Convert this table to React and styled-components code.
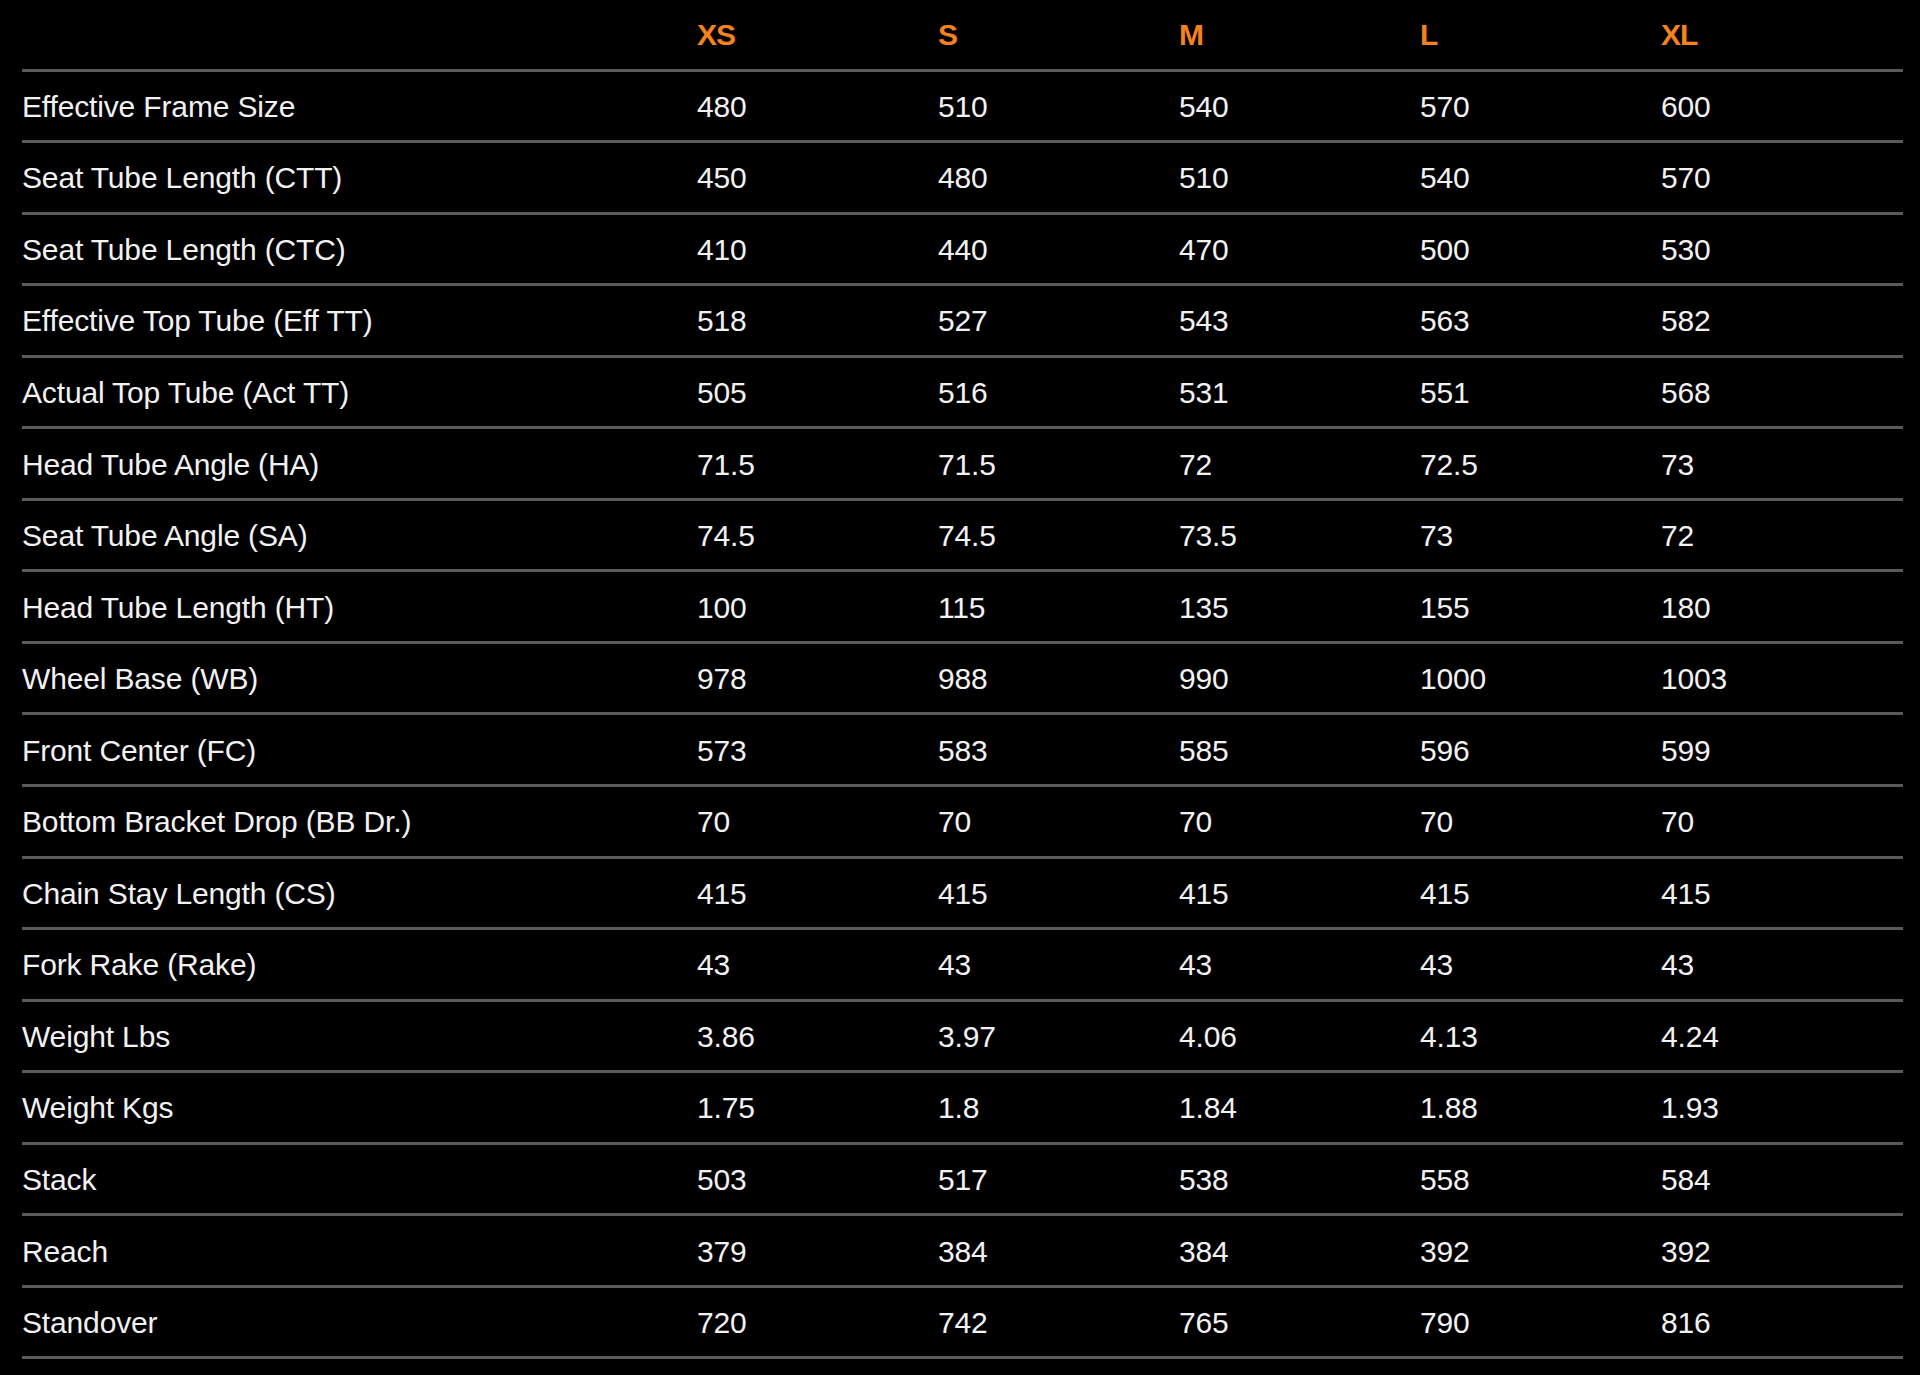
import React from "react";
import styled, { createGlobalStyle } from "styled-components";

const Global = createGlobalStyle`
  html, body {
    margin: 0;
    padding: 0;
    background: #000;
  }
  body {
    min-height: 1375px;
    font-family: "Liberation Sans", Arial, sans-serif;
  }
`;

const Page = styled.div`
  background: #000;
  min-height: 1375px;
  padding: 0 17px 0 22px;
  box-sizing: border-box;
`;

const Table = styled.div`
  display: flex;
  flex-direction: column;
`;

const Row = styled.div`
  display: grid;
  grid-template-columns: 675px repeat(5, 241px);
  align-items: center;
  height: ${(p) => (p.$header ? "71.5px" : "71.56px")};
  box-sizing: border-box;
  border-bottom: 3px solid #5a5a5a;
  padding-top: ${(p) => (p.$header ? "0" : "2px")};
`;

const Label = styled.div`
  color: #f2f2f2;
  font-size: 30px;
  letter-spacing: -0.15px;
  white-space: nowrap;
`;

const Cell = styled.div`
  color: #f2f2f2;
  font-size: 30px;
  letter-spacing: -0.15px;
`;

const Size = styled.div`
  color: #f5821f;
  font-size: 30px;
  font-weight: 700;
  letter-spacing: -1px;
  margin-top: 1px;
`;

const sizes = ["XS", "S", "M", "L", "XL"];

const rows = [
  ["Effective Frame Size", "480", "510", "540", "570", "600"],
  ["Seat Tube Length (CTT)", "450", "480", "510", "540", "570"],
  ["Seat Tube Length (CTC)", "410", "440", "470", "500", "530"],
  ["Effective Top Tube (Eff TT)", "518", "527", "543", "563", "582"],
  ["Actual Top Tube (Act TT)", "505", "516", "531", "551", "568"],
  ["Head Tube Angle (HA)", "71.5", "71.5", "72", "72.5", "73"],
  ["Seat Tube Angle (SA)", "74.5", "74.5", "73.5", "73", "72"],
  ["Head Tube Length (HT)", "100", "115", "135", "155", "180"],
  ["Wheel Base (WB)", "978", "988", "990", "1000", "1003"],
  ["Front Center (FC)", "573", "583", "585", "596", "599"],
  ["Bottom Bracket Drop (BB Dr.)", "70", "70", "70", "70", "70"],
  ["Chain Stay Length (CS)", "415", "415", "415", "415", "415"],
  ["Fork Rake (Rake)", "43", "43", "43", "43", "43"],
  ["Weight Lbs", "3.86", "3.97", "4.06", "4.13", "4.24"],
  ["Weight Kgs", "1.75", "1.8", "1.84", "1.88", "1.93"],
  ["Stack", "503", "517", "538", "558", "584"],
  ["Reach", "379", "384", "384", "392", "392"],
  ["Standover", "720", "742", "765", "790", "816"],
];

export default function App() {
  return (
    <>
      <Global />
      <Page>
        <Table>
          <Row $header>
            <Label />
            {sizes.map((s) => (
              <Size key={s}>{s}</Size>
            ))}
          </Row>
          {rows.map((r) => (
            <Row key={r[0]}>
              <Label>{r[0]}</Label>
              {r.slice(1).map((v, i) => (
                <Cell key={i}>{v}</Cell>
              ))}
            </Row>
          ))}
        </Table>
      </Page>
    </>
  );
}
